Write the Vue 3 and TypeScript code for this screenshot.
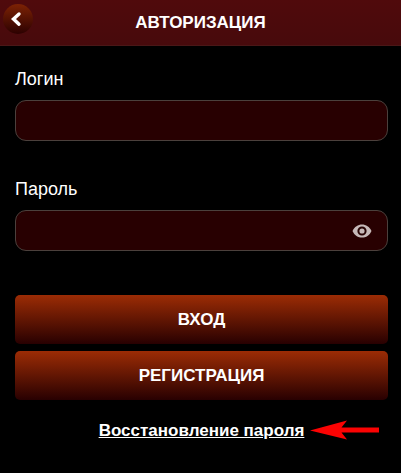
<script setup lang="ts">
import { ref } from 'vue'

const login = ref('')
const password = ref('')
const visible = ref(false)
</script>

<template>
  <div class="page">
    <header class="header">
      <button class="back" type="button" aria-label="Назад">
        <svg width="30" height="30" viewBox="0 0 30 30" aria-hidden="true">
          <path d="M16 10 L10.5 15 L16 20.2" fill="none" stroke="#fff" stroke-width="3.4" stroke-linecap="round" stroke-linejoin="miter" />
        </svg>
      </button>
      <h1 class="title">АВТОРИЗАЦИЯ</h1>
    </header>

    <form class="form" @submit.prevent>
      <div class="field">
        <label class="label" for="login">Логин</label>
        <input id="login" v-model="login" class="input" type="text" autocomplete="username" />
      </div>

      <div class="field">
        <label class="label" for="password">Пароль</label>
        <div class="control">
          <input
            id="password"
            v-model="password"
            class="input secret"
            :type="visible ? 'text' : 'password'"
            autocomplete="current-password"
          />
          <button class="eye" type="button" aria-label="Показать пароль" @click="visible = !visible">
            <svg width="20" height="14" viewBox="0 0 20 14" aria-hidden="true">
              <path d="M0.5 7 C2.5 2.6 6 0.4 10 0.4 S17.5 2.6 19.5 7 C17.5 11.4 14 13.6 10 13.6 S2.5 11.4 0.5 7 Z" fill="#c6b8b8" />
              <circle cx="10" cy="7" r="3.6" fill="#c6b8b8" stroke="#260303" stroke-width="2" />
            </svg>
          </button>
        </div>
      </div>

      <div class="actions">
        <button class="button" type="submit">ВХОД</button>
        <button class="button" type="button">РЕГИСТРАЦИЯ</button>
      </div>

      <div class="recovery">
        <a class="link" href="#recovery">Восстановление пароля</a>
        <svg class="arrow" width="70" height="20" viewBox="0 0 70 20" aria-hidden="true">
          <path d="M0 10.5 L37 0.5 L31.5 7.5 H69 V12.5 H31.5 L37 19.5 Z" fill="#fb0303" />
        </svg>
      </div>
    </form>
  </div>
</template>

<style>
body {
  margin: 0;
  background: #000;
}
</style>

<style scoped>
.page {
  min-height: 100vh;
  background: #000;
  color: #fff;
  font-family: "Liberation Sans", Arial, sans-serif;
}

.header {
  display: grid;
  grid-template-columns: 32px 1fr 32px;
  align-items: center;
  height: 45px;
  border-bottom: 1px solid #4a1717;
  background: linear-gradient(#500a0c, #470a0c);
}

.back {
  display: block;
  align-self: start;
  width: 30px;
  height: 30px;
  margin: 4px 0 0 3px;
  padding: 0;
  border: 0;
  border-radius: 50%;
  background: linear-gradient(#7c2204, #2c0101);
}

.back svg,
.eye svg {
  display: block;
}

.title {
  margin: 0;
  font-size: 17px;
  line-height: 44px;
  font-weight: 700;
  text-align: center;
}

.form {
  display: flex;
  flex-direction: column;
  padding: 20px 13px 20px 15px;
}

.field {
  display: flex;
  flex-direction: column;
  gap: 8px;
  margin-bottom: 35px;
}

.label {
  font-size: 18px;
  line-height: 26px;
}

.control {
  position: relative;
}

.input {
  box-sizing: border-box;
  display: block;
  width: 100%;
  height: 41px;
  padding: 0 12px;
  border: 1px solid #4b403c;
  border-radius: 11px;
  outline: none;
  background: #280001;
  color: #fff;
  font: 18px "Liberation Sans", Arial, sans-serif;
}

.secret {
  padding-right: 44px;
}

.eye {
  position: absolute;
  top: 0;
  right: 16px;
  display: flex;
  align-items: center;
  height: 100%;
  padding: 0;
  border: 0;
  background: none;
}

.actions {
  display: flex;
  flex-direction: column;
  gap: 7px;
  margin-top: 9px;
}

.button {
  height: 49px;
  padding: 0;
  border: 0;
  border-radius: 5px;
  background: linear-gradient(#9c2c05, #280001);
  color: #fff;
  font: 700 17px "Liberation Sans", Arial, sans-serif;
}

.recovery {
  display: flex;
  justify-content: center;
  position: relative;
  align-self: center;
  margin-top: 20px;
}

.link {
  color: #fff;
  font-size: 17px;
  line-height: 22px;
  font-weight: 700;
  text-decoration: underline;
  white-space: nowrap;
}

.arrow {
  position: absolute;
  top: 0;
  left: 100%;
  margin-left: 6px;
}
</style>
